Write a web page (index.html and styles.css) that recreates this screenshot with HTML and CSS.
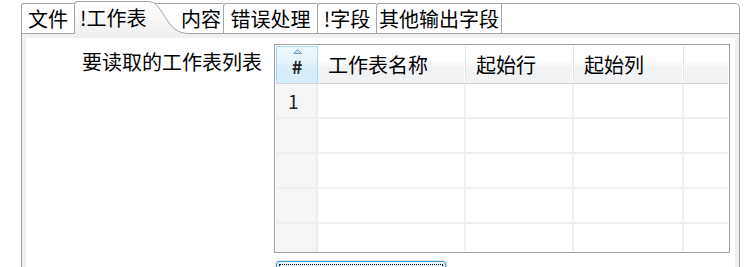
FILE: index.html
```html
<!DOCTYPE html>
<html lang="zh-CN">
<head>
<meta charset="utf-8">
<title>工作表</title>
<link rel="stylesheet" href="styles.css">
</head>
<body>
<div class="page">
  <div class="tabs">
    <div class="tab t-file">文件</div>
    <div class="tab active">!工作表<svg class="slope" width="41" height="33" viewBox="0 0 41 33"><defs><linearGradient id="ag" x1="0" y1="0" x2="0" y2="1"><stop offset="0" stop-color="#ffffff"/><stop offset="1" stop-color="#f0f0f0"/></linearGradient></defs><path d="M0 0.5 C7 0.5 10 5 16 14 C23 26 29 32.5 41 32.5 L41 33 L0 33 Z" fill="url(#ag)"/><path d="M0 0.5 C7 0.5 10 5 16 14 C23 26 29 32.5 41 32.5" fill="none" stroke="#a5a5a5"/></svg></div>
    <div class="tab t-content">内容</div>
    <div class="tab t-err">错误处理</div>
    <div class="tab t-field">!字段</div>
    <div class="tab t-other">其他输出字段</div>
    <div class="tab-fill"></div>
  </div>
  <div class="panel">
    <div class="inner">
      <div class="label">要读取的工作表列表</div>
      <div class="table">
        <div class="hc sel"><svg class="sort" width="9" height="5" viewBox="0 0 9 5"><path d="M0.5 4.5 L4.5 0.5 L8.5 4.5 Z" fill="#c5d9ec" stroke="#7f9fc2" stroke-width="1"/></svg>#</div>
        <div class="hc">工作表名称</div>
        <div class="hc">起始行</div>
        <div class="hc">起始列</div>
        <div class="hc last"></div>

        <div class="bc rh">1</div><div class="bc"></div><div class="bc"></div><div class="bc"></div><div class="bc last"></div>
        <div class="bc rh"></div><div class="bc"></div><div class="bc"></div><div class="bc"></div><div class="bc last"></div>
        <div class="bc rh"></div><div class="bc"></div><div class="bc"></div><div class="bc"></div><div class="bc last"></div>
        <div class="bc rh"></div><div class="bc"></div><div class="bc"></div><div class="bc"></div><div class="bc last"></div>
        <div class="bc rh"></div><div class="bc"></div><div class="bc"></div><div class="bc"></div><div class="bc last"></div>
      </div>
      <div class="btn"><span class="focus"></span></div>
    </div>
  </div>
</div>
</body>
</html>
```
FILE: styles.css
```css
html, body {
  margin: 0;
  padding: 0;
  background: #ffffff;
}
body {
  width: 756px;
  height: 267px;
  overflow: hidden;
  font-family: "Noto Sans CJK SC", "Noto Sans", sans-serif;
  font-size: 20px;
  color: #000000;
}
.page {
  padding: 1px 0 0 21px;
  width: 719px;
}
.tabs {
  display: flex;
  align-items: flex-end;
  height: 32px;
  position: relative;
  z-index: 1;
}
.tab {
  box-sizing: border-box;
  height: 30px;
  border-top: 1px solid #a5a5a5;
  border-left: 1px solid #a5a5a5;
  border-radius: 3px 0 0 0;
  background: #ffffff;
  line-height: 29px;
  text-align: center;
  white-space: nowrap;
}
.t-file { width: 53px; }
.t-content {
  width: 75px;
  border-left-color: transparent;
  border-radius: 0;
  text-align: left;
  padding-left: 32px;
}
.t-err { width: 94px; }
.t-field { width: 59px; }
.t-other { width: 125px; }
.tab-fill {
  flex: 1;
  box-sizing: border-box;
  height: 30px;
  border-top: 1px solid #a5a5a5;
  border-left: 1px solid #a5a5a5;
  border-right: 1px solid #a5a5a5;
  border-radius: 0 5px 0 0;
  background: #ffffff;
}
.tab.active {
  width: 74px;
  height: 33px;
  margin-bottom: -1px;
  position: relative;
  z-index: 2;
  border-radius: 4px 0 0 0;
  background: linear-gradient(#ffffff, #f0f0f0);
  line-height: 32px;
  text-align: left;
  padding-left: 5px;
}
.slope {
  position: absolute;
  left: 100%;
  top: -1px;
  display: block;
}
.panel {
  border: 1px solid #a5a5a5;
  border-bottom: none;
  padding: 4px 4px 0 4px;
  background: #f0f0f0;
}
.inner {
  background: #ffffff;
  height: 229px;
  overflow: hidden;
  display: grid;
  grid-template-columns: 236px 456px;
  column-gap: 12px;
  align-content: start;
}
.label {
  text-align: right;
  padding-top: 11px;
  line-height: 26px;
  white-space: nowrap;
}
.table {
  margin-top: 6px;
  height: 209px;
  box-sizing: border-box;
  border: 1px solid #a0a0a0;
  padding: 1px;
  overflow: hidden;
  display: grid;
  grid-template-columns: 42px 148px 108px 110px 1fr;
  grid-template-rows: 38px;
  grid-auto-rows: 35px;
  background: #ffffff;
}
.hc {
  box-sizing: border-box;
  border-bottom: 1px solid #d5d5d5;
  border-right: 1px solid #e3e4e6;
  box-shadow: inset -1px 0 0 #ffffff;
  background: linear-gradient(#ffffff 0%, #ffffff 40%, #f1f2f4 60%, #f1f2f4 100%);
  line-height: 37px;
  padding-left: 10px;
  white-space: nowrap;
}
.hc.sel {
  position: relative;
  padding-left: 0;
  text-align: center;
  border: 1px solid #a9d8f5;
  border-bottom-color: #d5d5d5;
  box-shadow: none;
  background: linear-gradient(#eef7fd 0%, #e3f2fc 45%, #d8edfa 55%, #d5ecfa 100%);
  font-size: 18px;
  font-weight: bold;
  line-height: 38px;
  color: #222222;
}
.sort {
  position: absolute;
  left: 16px;
  top: 2px;
  display: block;
}
.hc.last {
  border-right: none;
  box-shadow: none;
}
.bc {
  box-sizing: border-box;
  border-right: 2px solid #eef2f8;
  border-bottom: 2px solid #efefef;
}
.bc.rh {
  background: #f6f6f6;
  border-right-color: #e9eef6;
  padding-left: 12px;
  line-height: 33px;
  font-size: 19px;
  color: #222222;
}
.bc.last {
  border-right: none;
}
.btn {
  grid-column: 2;
  margin: 8px 0 0 2px;
  width: 170px;
  height: 30px;
  box-sizing: border-box;
  border: 1px solid #2f9be0;
  border-radius: 3px;
  box-shadow: 0 0 0 1px #e4e4e4;
  background: linear-gradient(#eaf6fd, #d9f0fc);
  padding: 2px;
}
.focus {
  display: block;
  height: 100%;
  box-sizing: border-box;
  border: 1px dotted #000000;
}
```
